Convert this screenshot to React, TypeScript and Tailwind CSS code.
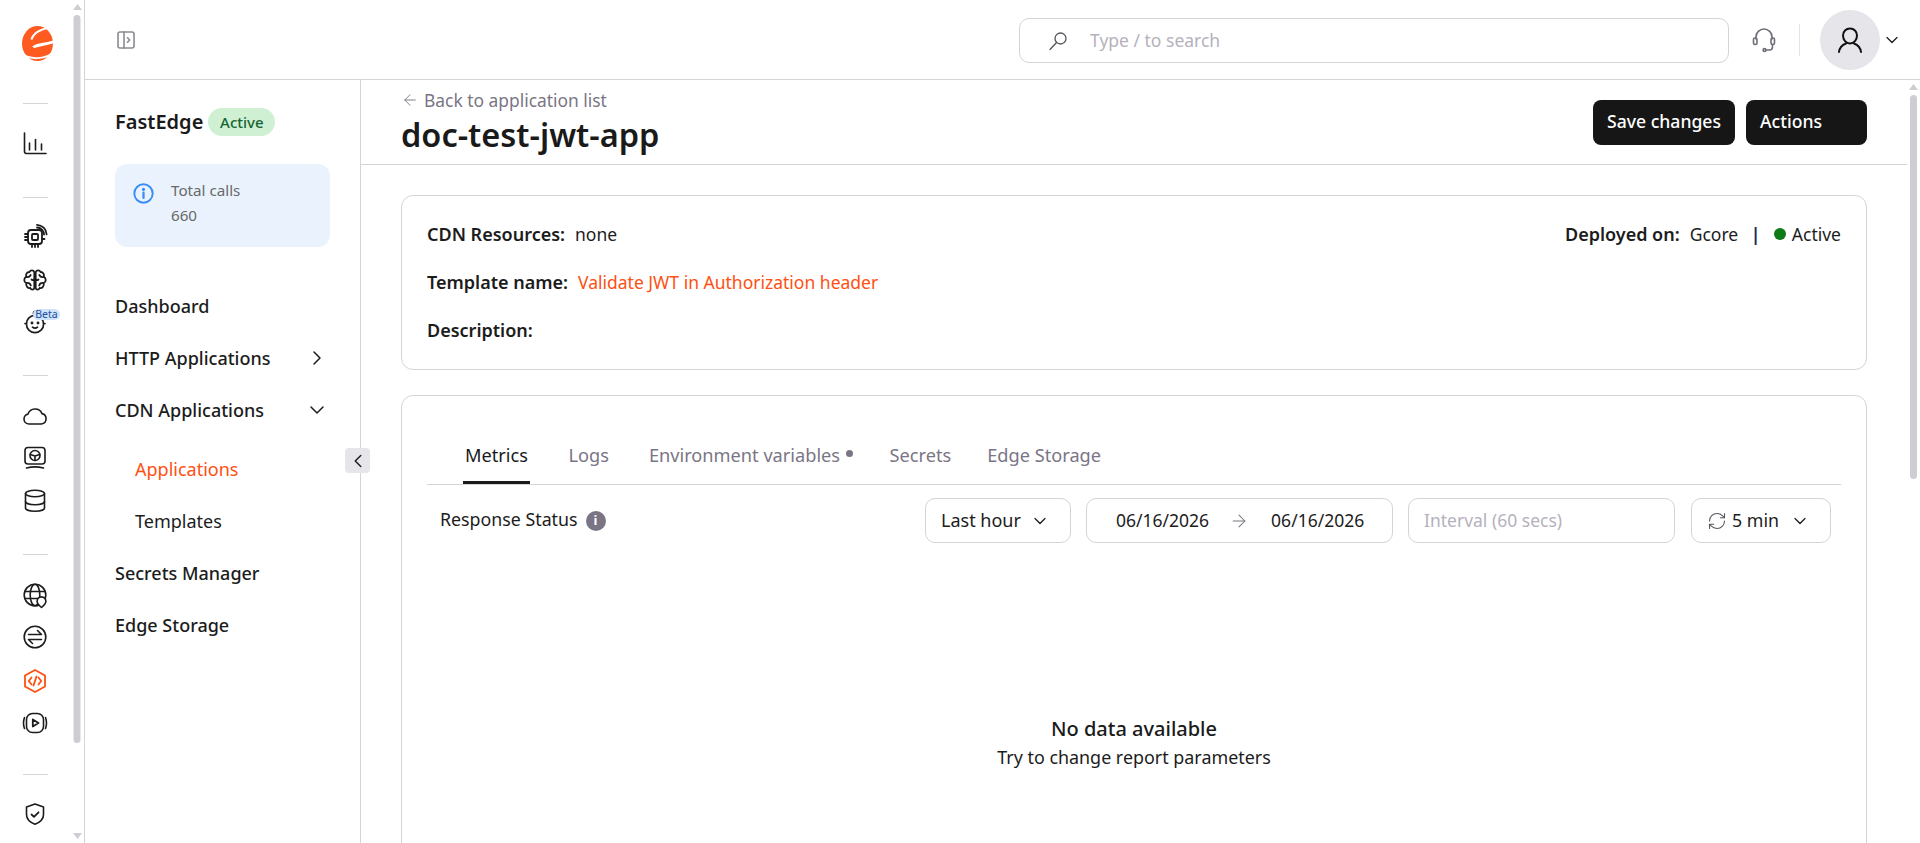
import React from "react";
import { ChevronDown, ChevronRight, ChevronLeft, RefreshCw, ArrowRight, ArrowLeft } from "lucide-react";

type P = { children: React.ReactNode; className?: string; sw?: number };
function Ic({ children, className = "text-[#1c1c1c]", sw = 1.6 }: P) {
  return (
    <svg width="24" height="24" viewBox="0 0 24 24" fill="none" stroke="currentColor" strokeWidth={sw} strokeLinecap="round" strokeLinejoin="round" className={"shrink-0 overflow-visible " + className}>
      {children}
    </svg>
  );
}

function Logo() {
  return (
    <svg width="32" height="36" viewBox="0 0 32 36" fill="none" className="shrink-0 ml-[6px]">
      <ellipse cx="15.500" cy="17.500" rx="15.500" ry="17.500" fill="#ff5a1f" />
      <path d="M28 1.500C20 3 11.500 6 9.500 13.500" stroke="#fff" strokeWidth="2.200" fill="none" />
      <path d="M11.500 21.500C13 18.800 22 19 33 15.500" stroke="#fff" strokeWidth="3" fill="none" />
      <path d="M-1 27c8 7 24 7 33-1" stroke="#fff" strokeWidth="2" fill="none" />
    </svg>
  );
}

const Chart = () => (
  <Ic><path d="M1.500 2v18.500a2 2 0 0 0 2 2H23" /><path d="M6.500 12v7M12.500 8.500V19M18.500 13v6" /></Ic>
);
const Chip = () => (
  <Ic sw={1.8}>
    <rect x="5" y="6" width="14" height="14" rx="3" />
    <rect x="9" y="10" width="6" height="6" rx="1" />
    <path d="M2 10h3M2 13h3M2 16h3M9 20v3M12 20v3M15 20v3M19 15h2.500" />
    <path d="M14 3.500a7 7 0 0 1 7 7M14 .8a10 10 0 0 1 9.600 9.600" />
  </Ic>
);
const BrainIcon = () => (
  <Ic sw={1.8}>
    <path d="M11.300 4C10.500 1.800 7.300 1.800 6.500 4 4 3.800 2.300 6.500 3.300 8.800 .6 10 .6 14 3.300 15.300 2.600 18 4.800 20.500 7.300 20 8.200 22.200 10.800 22.200 11.300 20Z" />
    <path d="M12.700 4C13.500 1.800 16.700 1.800 17.500 4 20 3.800 21.700 6.500 20.700 8.800 23.400 10 23.400 14 20.700 15.300 21.400 18 19.200 20.500 16.700 20 15.800 22.200 13.200 22.200 12.700 20Z" />
    <path d="M3.500 9c2 .3 3.500-.5 4.200-2M3.500 15c2-.3 3.700.5 4.300 2.500M8.500 11.500c1 .8 2 .8 2.800 0M20.500 9c-2 .3-3.500-.5-4.200-2M20.500 15c-2-.3-3.700.5-4.300 2.500M15.500 11.500c-1 .8-2 .8-2.800 0" />
  </Ic>
);
const Baby = () => (
  <Ic sw={1.7}>
    <circle cx="12" cy="14" r="8.600" />
    <path d="M12 5.400C10 4.500 9.800 2 12 1.400" />
    <path d="M9.500 17.200q2.500 2 5 0" />
    <path d="M3.400 13.500H2M20.600 13.500H22" />
    <circle cx="9" cy="13" r=".6" fill="currentColor" />
    <circle cx="15" cy="13" r=".6" fill="currentColor" />
  </Ic>
);
const Cloud = () => (
  <Ic><path d="M6 20a5 5 0 0 1-1-9.900A7.500 7.500 0 0 1 19 9.600a5.300 5.300 0 0 1-.5 10.400Z" /></Ic>
);
const Monitor = () => (
  <Ic>
    <rect x="2" y="1.500" width="20" height="16.500" rx="3" />
    <circle cx="12" cy="9.500" r="5" />
    <path d="M7.300 8.500 12 10l4.700-1.500M12 10v4.500" />
    <path d="M3.500 22q8.500-2.200 17 0" />
  </Ic>
);
const Db = () => (
  <Ic>
    <ellipse cx="12" cy="5.500" rx="9.500" ry="3.200" />
    <path d="M2.500 5.500V20c0 1.800 4.300 3.200 9.500 3.200s9.500-1.400 9.500-3.200V5.500" />
    <path d="M2.500 13.500c0 1.800 4.300 3.200 9.500 3.200s9.500-1.400 9.500-3.200" />
  </Ic>
);
const GlobePin = () => (
  <Ic>
    <circle cx="12" cy="12" r="10.800" />
    <ellipse cx="12" cy="12" rx="4.800" ry="10.800" />
    <path d="M1.800 8.500h20.400M1.800 15.500h20.400" />
    <path d="M18.500 24.500c-2.600-2.200-4.400-4-4.400-6.200a4.400 4.400 0 0 1 8.800 0c0 2.200-1.800 4-4.400 6.200Z" fill="#fff" />
  </Ic>
);
const Transfer = () => (
  <Ic>
    <circle cx="12" cy="12" r="10.800" />
    <path d="M5.500 9.500h13M14.500 5.500l4 4M18.500 14.500h-13M9.500 18.500l-4-4" />
  </Ic>
);
const Code = () => (
  <Ic className="text-[#ff4f12]" sw={1.8}>
    <path d="M12 1 22 6.500v11L12 23 2 17.500v-11Z" />
    <path d="M8.500 8.500 5.800 12l2.700 3.500M15.500 8.500l2.700 3.500-2.700 3.500M13.500 7.500l-3 9" />
  </Ic>
);
const Video = () => (
  <Ic>
    <rect x="3.500" y="2.500" width="17" height="19" rx="6" />
    <path d="M1.500 6.500q-2 5.500 0 11M22.500 6.500q2 5.500 0 11" />
    <path d="M9.800 8.500 15.500 12l-5.700 3.500Z" strokeWidth="1.800" />
  </Ic>
);
const Shield = () => (
  <Ic>
    <path d="M12 2l8.500 3v7.500c0 5-4 8-8.500 9.800-4.500-1.800-8.500-4.800-8.500-9.800V5Z" />
    <path d="M8.500 12.500l2.500 2.300 4.500-4.500" strokeWidth="1.800" />
  </Ic>
);

const Divider = ({ cls }: { cls: string }) => <div className={"w-[25px] h-px bg-[#d4d4d8] " + cls} />;

function Arrow({ up }: { up?: boolean }) {
  return (
    <svg width="9" height="6" viewBox="0 0 9 6" className="shrink-0">
      <path d={up ? "M4.500 0 9 6H0Z" : "M0 0h9L4.500 6Z"} fill="#cfcdd3" />
    </svg>
  );
}

function Rail() {
  return (
    <aside className="w-[85px] shrink-0 h-full border-r border-[#d4d4d8] flex">
      <div className="w-[70px] flex flex-col items-center pt-[26px]">
        <Logo />
        <Divider cls="mt-[41px] mb-[27px]" />
        <Chart />
        <Divider cls="mt-[42px] mb-[26px]" />
        <div className="flex flex-col items-center">
          <Chip />
          <div className="mt-[20px]"><BrainIcon /></div>
          <div className="relative mt-[18px]">
            <Baby />
            <span className="absolute left-[10px] top-[-1px] h-[11px] w-[27px] rounded-full bg-[#cfe3fb] text-[#1a4fa0] text-[10.500px] leading-[11px] text-center">Beta</span>
          </div>
        </div>
        <Divider cls="mt-[41px] mb-[28px]" />
        <div className="flex flex-col gap-[18px] items-center">
          <Cloud />
          <Monitor />
          <Db />
        </div>
        <Divider cls="mt-[42px] mb-[28px]" />
        <div className="flex flex-col items-center">
          <GlobePin />
          <div className="mt-[18px]"><Transfer /></div>
          <div className="mt-[20px]"><Code /></div>
          <div className="mt-[18px]"><Video /></div>
        </div>
        <Divider cls="mt-[39px] mb-[27px]" />
        <Shield />
      </div>
      <div className="w-[14px] flex flex-col items-center">
        <div className="mt-[4px]"><Arrow up /></div>
        <div className="mt-[5px] w-[7px] h-[728px] rounded-full bg-[#cfcdd3] -translate-x-[0.5px]" />
        <div className="mt-[90px]"><Arrow /></div>
      </div>
    </aside>
  );
}

function TopBar() {
  return (
    <header className="h-[80px] shrink-0 border-b border-[#d4d4d8] flex items-center">
      <svg width="18" height="18" viewBox="0 0 18 18" fill="none" stroke="#8a8a92" strokeWidth="1.600" strokeLinecap="round" strokeLinejoin="round" className="ml-[32px] shrink-0">
        <rect x="1" y="1" width="16" height="16" rx="2" />
        <path d="M7 1v16M10.500 6.800 12.700 9l-2.200 2.200" />
      </svg>
      <div className="ml-[884px] mt-[2px] w-[710px] h-[45px] rounded-[10px] border border-[#d4d4d8] flex items-center pl-[28px]">
        <svg width="20" height="20" viewBox="0 0 20 20" fill="none" stroke="#55535c" strokeWidth="1.300" strokeLinecap="round" className="shrink-0">
          <circle cx="12.500" cy="7.500" r="5.500" />
          <path d="M8.500 11.500 2 18.500" />
        </svg>
        <span className="ml-[22px] text-[17.500px] text-[#b5b1bd]">Type / to search</span>
      </div>
      <svg width="26" height="26" viewBox="0 0 26 26" fill="none" stroke="#6f6d76" strokeWidth="1.600" strokeLinecap="round" className="ml-[22px] shrink-0">
        <path d="M5 12V10a8 8 0 0 1 16 0v2" />
        <rect x="2.500" y="11" width="3.500" height="6.500" rx="1.500" />
        <rect x="20" y="11" width="3.500" height="6.500" rx="1.500" />
        <path d="M21.500 17.500v2.500a3 3 0 0 1-3 3H15" />
        <circle cx="13.500" cy="23" r="1.400" />
      </svg>
      <div className="ml-[22px] w-px h-[32px] bg-[#e4e4e7]" />
      <div className="ml-[20px] w-[60px] h-[60px] rounded-full bg-[#e6e5ea] flex items-center justify-center">
        <svg width="26" height="26" viewBox="0 0 26 26" fill="none" stroke="#111" strokeWidth="2" strokeLinecap="round">
          <path d="M13 1.500c4 0 7 3 7 7 0 4.500-3 8-7 8s-7-3.500-7-8c0-4 3-7 7-7Z" />
          <path d="M2 25c.5-4 3-7 7-8.500M24 25c-.5-4-3-7-7-8.500" />
        </svg>
      </div>
      <ChevronDown size={20} strokeWidth={1.500} className="ml-[2px] text-[#1c1c1c]" />
    </header>
  );
}

function NavItem({ label, icon, cls = "" }: { label: string; icon?: React.ReactNode; cls?: string }) {
  return (
    <div className={"h-[52px] w-[212px] flex items-center justify-between text-[18px] font-medium text-[#1c1c1c] " + cls}>
      <span>{label}</span>
      {icon}
    </div>
  );
}

function Sidebar() {
  return (
    <nav className="relative w-[276px] shrink-0 h-full border-r border-[#d4d4d8] pl-[30px] pt-[28px]">
      <div className="flex items-center gap-[5px] h-[28px]">
        <span className="text-[20px] font-semibold text-[#1a1a1a]">FastEdge</span>
        <span className="h-[28px] w-[67px] rounded-full bg-[#cff0d3] text-[#166534] text-[15px] flex items-center justify-center font-medium">Active</span>
      </div>
      <div className="mt-[28px] w-[215px] h-[83px] rounded-[12px] bg-[#eaf3fd] flex pl-[18px] pt-[15px]">
        <svg width="21" height="21" viewBox="0 0 24 24" fill="none" stroke="#3a8df5" strokeWidth="2.200" strokeLinecap="round" className="mt-[4px] shrink-0">
          <circle cx="12" cy="12" r="10.500" />
          <path d="M12 11v6" strokeWidth="2.600" />
          <circle cx="12" cy="7.300" r=".7" fill="#3a8df5" />
        </svg>
        <div className="ml-[17px] text-[15.200px] leading-[25px] text-[#696969] -mt-px">
          <div>Total calls</div>
          <div>660</div>
        </div>
      </div>
      <div className="mt-[33px]">
        <NavItem label="Dashboard" />
        <NavItem label="HTTP Applications" icon={<ChevronRight size={24} strokeWidth={1.500} className="text-[#1c1c1c] -mr-[2px]" />} />
        <NavItem label="CDN Applications" icon={<ChevronDown size={24} strokeWidth={1.500} className="text-[#1c1c1c] -mr-[2px]" />} />
        <NavItem label="Applications" cls="mt-[7px] pl-[20px] !font-normal !text-[#ff4f12]" />
        <NavItem label="Templates" cls="pl-[20px] !font-normal" />
        <NavItem label="Secrets Manager" />
        <NavItem label="Edge Storage" />
      </div>
      <div className="absolute left-[260px] top-[368px] w-[25px] h-[25px] rounded-[4px] bg-[#e6e5ea] flex items-center justify-center">
        <ChevronLeft size={22} strokeWidth={1.600} className="text-[#1c1c1c]" />
      </div>
    </nav>
  );
}

const CtrlBox = ({ cls, children }: { cls: string; children: React.ReactNode }) => (
  <div className={"h-[45px] rounded-[10px] border border-[#d4d4d8] flex items-center shrink-0 text-[#1c1c1c] " + cls}>{children}</div>
);

function Tab({ label, active, cls = "" }: { label: string; active?: boolean; cls?: string }) {
  return (
    <div className={"h-[41px] px-[2px] -mb-px text-[18.200px] leading-[24px] " + (active ? "border-b-[3px] border-[#1a1a1a] text-[#1a1a1a] " : "text-[#7a7585] ") + cls}>
      {label}
    </div>
  );
}

function Content() {
  return (
    <main className="flex-1 min-w-0 flex h-full overflow-hidden">
      <div className="flex-1 min-w-0 flex flex-col">
        <div className="h-[85px] shrink-0 border-b border-[#d4d4d8] px-[40px] flex justify-between">
          <div className="pt-[8px]">
            <div className="flex items-center text-[17.400px] leading-[24px] text-[#7a7585]">
              <ArrowLeft size={18} strokeWidth={1.250} className="mr-[5px]" />
              Back to application list
            </div>
            <h1 className="mt-[1px] text-[32.500px] leading-[44px] font-semibold text-[#1a1a1a]">doc-test-jwt-app</h1>
          </div>
          <div className="pt-[20px] flex gap-[11px] text-white text-[17.600px] font-medium">
            <div className="h-[45px] w-[142px] pb-[2px] rounded-[8px] bg-[#161616] flex items-center justify-center">Save changes</div>
            <div className="h-[45px] w-[121px] pb-[2px] rounded-[8px] bg-[#161616] flex items-center pl-[14px]">Actions</div>
          </div>
        </div>
        <div className="px-[40px] pt-[30px] flex flex-col gap-[25px]">
          <section className="h-[175px] rounded-[12px] border border-[#d4d4d8] px-[25px] pt-[26px] flex justify-between text-[17.500px] leading-[24px] text-[#1c1c1c]">
            <div className="flex flex-col gap-[24px]">
              <div><b className="font-semibold text-[18px]">CDN Resources:</b><span className="ml-[10px]">none</span></div>
              <div><b className="font-semibold text-[18px]">Template name:</b><span className="ml-[10px] text-[#ff4f12]">Validate JWT in Authorization header</span></div>
              <div><b className="font-semibold text-[18px]">Description:</b></div>
            </div>
            <div className="flex items-center h-[24px]">
              <b className="font-semibold text-[18px]">Deployed on:</b>
              <span className="ml-[10px]">Gcore</span>
              <span className="ml-[12.500px] text-[#1a2a5a] font-bold">|</span>
              <span className="ml-[13.500px] w-[12px] h-[12px] rounded-full bg-[#0e7a16]" />
              <span className="ml-[6px]">Active</span>
            </div>
          </section>
          <section className="h-[500px] rounded-[12px] border border-[#d4d4d8] px-[25px] text-[#1c1c1c]">
            <div className="pt-[47px] pl-[36px] flex border-b border-[#d4d4d8] h-[89px]">
              <Tab label="Metrics" active />
              <Tab label="Logs" cls="ml-[36.500px]" />
              <div className="ml-[36px] flex">
                <Tab label="Environment variables" cls="!pr-0" />
                <span className="mt-[7px] ml-[6px] w-[7px] h-[7px] rounded-full bg-[#7a7585]" />
              </div>
              <Tab label="Secrets" cls="ml-[34.500px]" />
              <Tab label="Edge Storage" cls="ml-[32px]" />
            </div>
            <div className="mt-[13px] pl-[13px] pr-[10px] flex items-center">
              <span className="text-[17.800px] -translate-y-px">Response Status</span>
              <span className="ml-[8px] w-[20px] h-[20px] rounded-full bg-[#7a7585] text-white text-[13px] font-bold flex items-center justify-center">i</span>
              <CtrlBox cls="ml-auto w-[146px] pl-[15px] pr-[20px] justify-between mr-[15px] text-[18px]">
                Last hour <ChevronDown size={20} strokeWidth={1.500} />
              </CtrlBox>
              <CtrlBox cls="w-[307px] pl-[29px] mr-[15px] text-[17.500px]">
                <span>06/16/2026</span>
                <ArrowRight size={20} strokeWidth={1.250} className="ml-[20px] text-[#77757d]" />
                <span className="ml-[22px]">06/16/2026</span>
              </CtrlBox>
              <CtrlBox cls="w-[267px] pl-[15px] mr-[16px] !text-[#b5b1bd] text-[17.500px]">Interval (60 secs)</CtrlBox>
              <CtrlBox cls="w-[140px] pl-[15px] text-[17.800px]">
                <RefreshCw size={20} strokeWidth={1.250} className="text-[#55535c]" />
                <span className="ml-[5px]">5 min</span>
                <ChevronDown size={20} strokeWidth={1.500} className="ml-[11px]" />
              </CtrlBox>
            </div>
            <div className="mt-[172px] flex flex-col items-center">
              <div className="text-[20px] leading-[28px] font-medium text-[#1a1a1a]">No data available</div>
              <div className="mt-[2px] text-[17.900px] leading-[24px]">Try to change report parameters</div>
            </div>
          </section>
        </div>
      </div>
      <div className="w-[13px] shrink-0 flex flex-col items-center">
        <div className="mt-[4px]"><Arrow up /></div>
        <div className="mt-[5px] w-[7px] h-[384px] rounded-full bg-[#cfcdd3]" />
      </div>
    </main>
  );
}

export default function App() {
  return (
    <div className="h-screen w-full flex bg-white overflow-hidden font-['Noto_Sans',sans-serif]">
      <Rail />
      <div className="flex-1 min-w-0 flex flex-col h-full">
        <TopBar />
        <div className="flex-1 min-h-0 flex">
          <Sidebar />
          <Content />
        </div>
      </div>
    </div>
  );
}
